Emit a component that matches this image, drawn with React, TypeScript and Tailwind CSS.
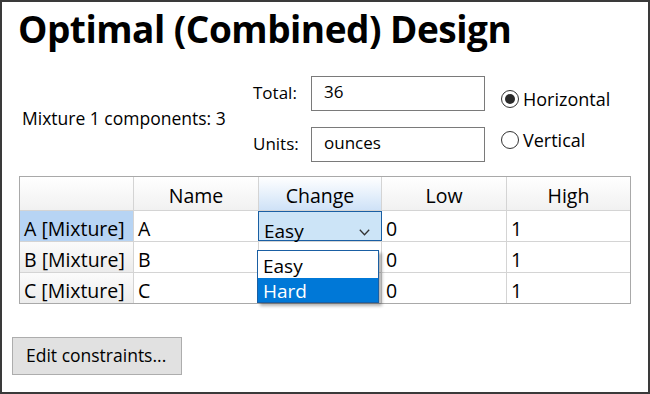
import * as React from "react";

const font = { fontFamily: '"Open Sans", "Noto Sans", sans-serif' };

function HeaderCell({ label, active }: { label: string; active?: boolean }) {
  return (
    <div
      className={
        "h-[33px] flex items-center justify-center pt-[4px] text-[19.5px] text-black border-l border-[#d4d4d4] " +
        (active
          ? "bg-gradient-to-b from-[#ffffff] to-[#cfe2f7]"
          : "bg-gradient-to-b from-[#ffffff] to-[#f1f1f1]")
      }
    >
      {label}
    </div>
  );
}

function RowHeader({ label, selected }: { label: string; selected?: boolean }) {
  return (
    <div
      className={
        "h-[31px] flex items-center pl-[4px] pt-[6px] text-[19.5px] text-black border-t border-[#d4d4d4] " +
        (selected ? "bg-[#b7d4f4]" : "bg-gradient-to-b from-[#fbfbfb] to-[#ececec]")
      }
    >
      {label}
    </div>
  );
}

function Cell({ children }: { children?: React.ReactNode }) {
  return (
    <div className="h-[31px] flex items-center pl-[4px] pt-[6px] text-[19.5px] text-black bg-white border-t border-l border-[#d4d4d4]">
      {children}
    </div>
  );
}

export default function App() {
  const rows = ["A", "B", "C"];
  return (
    <div
      className="w-[650px] h-[394px] bg-white border-2 border-[#3a3a3a] flex flex-col overflow-hidden"
      style={font}
    >
      <h1 className="text-[37px] font-bold leading-none text-black pl-[16px] pt-[8px] tracking-[-0.5px]">
        Optimal (Combined) Design
      </h1>

      <div className="flex items-center mt-[28px] h-[87px]">
        <div className="w-[251px] pl-[20px] text-[17.5px] text-black">Mixture 1 components: 3</div>
        <div className="flex flex-col gap-[16px]">
          <div className="flex items-center">
            <span className="w-[58px] text-[17px] text-black">Total:</span>
            <div className="w-[174px] h-[35px] border border-[#7a7a7a] flex items-center pl-[12px] pb-[3px] text-[17px] text-black">
              36
            </div>
          </div>
          <div className="flex items-center">
            <span className="w-[58px] text-[17px] text-black">Units:</span>
            <div className="w-[174px] h-[35px] border border-[#7a7a7a] flex items-center pl-[12px] pb-[2px] text-[17px] text-black">
              ounces
            </div>
          </div>
        </div>
        <div className="flex flex-col gap-[14px] ml-[16px] pt-[2px]">
          <div className="flex items-center gap-[4px]">
            <div className="w-[18px] h-[18px] rounded-full border border-[#333] flex items-center justify-center">
              <div className="w-[10px] h-[10px] rounded-full bg-[#2a2a2a]" />
            </div>
            <span className="text-[18px] text-black">Horizontal</span>
          </div>
          <div className="flex items-center gap-[4px]">
            <div className="w-[18px] h-[18px] rounded-full border border-[#333]" />
            <span className="text-[18px] text-black">Vertical</span>
          </div>
        </div>
      </div>

      <div className="ml-[17px] mt-[14px] w-[612px] border border-[#a9a9a9] grid grid-cols-[113px_125px_123px_125px_124px]">
        <div className="h-[33px] bg-gradient-to-b from-[#ffffff] to-[#f1f1f1]" />
        <HeaderCell label="Name" />
        <HeaderCell label="Change" active />
        <HeaderCell label="Low" />
        <HeaderCell label="High" />
        {rows.map((r, i) => (
          <React.Fragment key={r}>
            <RowHeader label={`${r} [Mixture]`} selected={i === 0} />
            <Cell>{r}</Cell>
            {i === 0 ? (
              <div className="relative h-[31px] bg-white border-t border-l border-[#d4d4d4]">
                <div className="absolute left-[-1px] top-[0px] w-[124px] h-[30px] bg-[#cce4f7] border border-[#1a5fa3] flex items-center justify-between pl-[5px] pr-[11px] text-[19px] text-black">
                  <span className="pt-[11px]">Easy</span>
                  <svg width="11" height="7" viewBox="0 0 11 7" className="mt-[13px]">
                    <path d="M0.8 0.8 L5.5 5.8 L10.2 0.8" fill="none" stroke="#333" strokeWidth="1.3" />
                  </svg>
                </div>
                <div className="absolute z-10 left-[-2px] top-[39px] w-[122px] bg-white border border-[#1a5fa3] shadow-[3px_3px_3px_rgba(0,0,0,0.3)] text-[19px]">
                  <div className="h-[27px] flex items-center pl-[5px] pt-[3px] text-black bg-white">Easy</div>
                  <div className="h-[24px] flex items-center pl-[5px] pt-[2px] text-white bg-[#0078d7]">Hard</div>
                </div>
              </div>
            ) : (
              <Cell />
            )}
            <Cell>0</Cell>
            <Cell>1</Cell>
          </React.Fragment>
        ))}
      </div>

      <div className="ml-[10px] mt-[33px]">
        <button className="w-[170px] h-[38px] bg-[#e1e1e1] border border-[#adadad] text-[17.5px] text-black text-left pl-[13px] pb-[2px]">
          Edit constraints...
        </button>
      </div>
    </div>
  );
}
